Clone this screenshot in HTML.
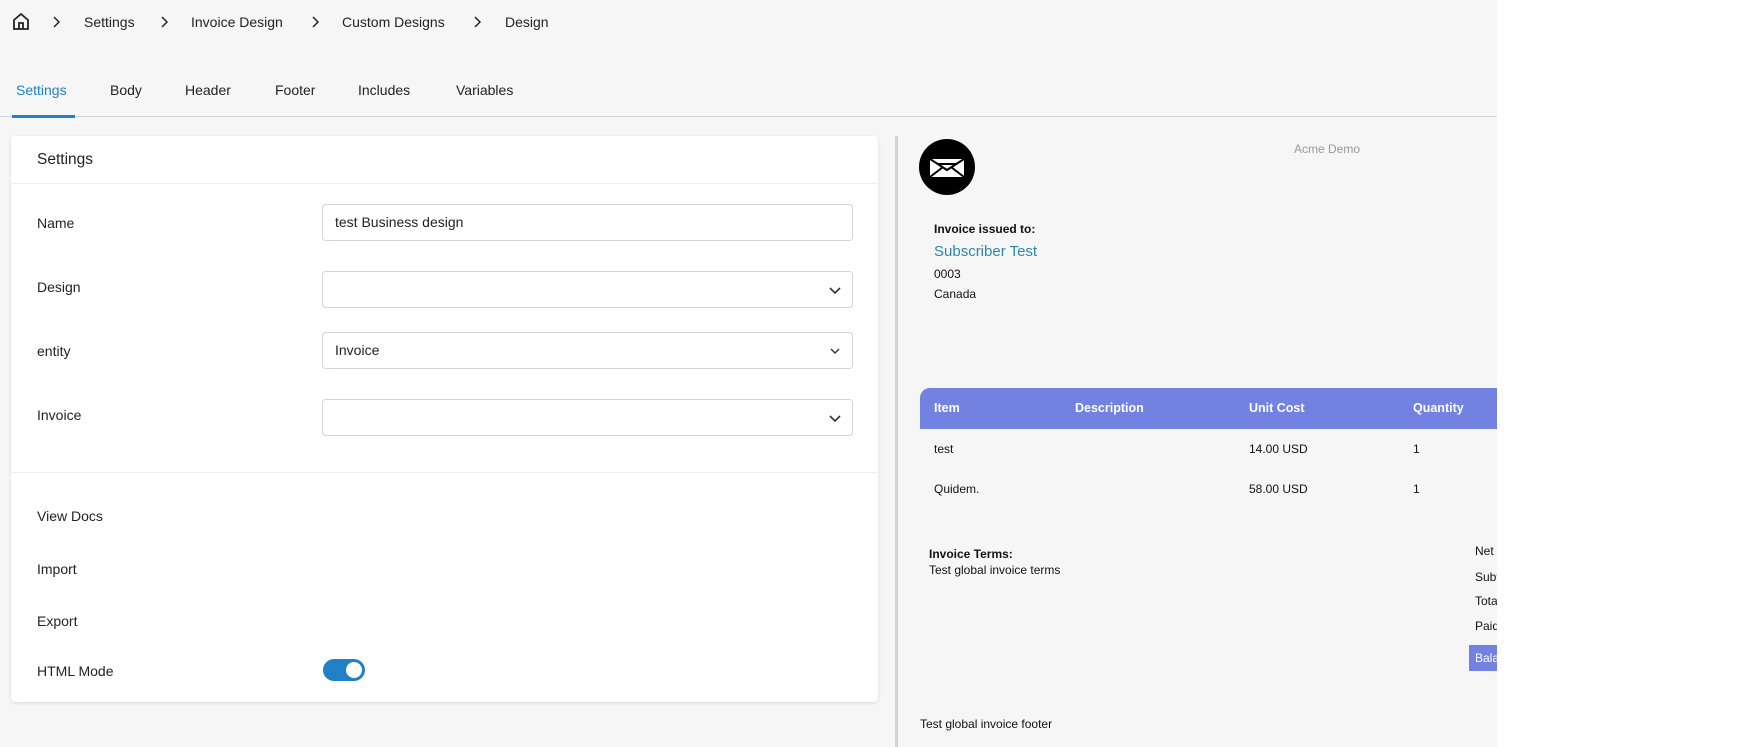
<!DOCTYPE html>
<html><head><meta charset="utf-8"><style>
*{box-sizing:border-box;margin:0;padding:0}
body{width:1740px;height:747px;overflow:hidden;background:#fff;font-family:"Liberation Sans",sans-serif;color:#1f2937;position:relative}
.pg{position:absolute;left:0;top:0;width:1497px;height:747px;background:#f6f6f6;overflow:hidden}
.a{position:absolute;white-space:nowrap}
.bc{font-size:14px;top:14px;color:#222}
.ch{position:absolute;top:16px}
.tab{font-size:14px;top:82px;color:#222}
.card{position:absolute;left:11px;top:136px;width:867px;height:566px;background:#fff;border-radius:4px;box-shadow:0 1px 3px rgba(0,0,0,.12)}
.lbl{font-size:14px;color:#222}
.inp{position:absolute;left:311px;width:531px;height:37px;border:1px solid #d1d5db;border-radius:4px;font-size:14px;padding:0 12px;line-height:35px;color:#222}
.inp svg{position:absolute;right:10px;top:11px}
.pv{font-size:12px;color:#111}
.th{font-size:12.5px;color:#fff;font-weight:bold;top:401px}
</style></head><body>
<div class="pg">
<svg class="a" style="left:12px;top:12px" width="18" height="19" viewBox="0 0 18 19" fill="none" stroke="#222" stroke-width="1.8"><path d="M2 8 L9 2 L16 8 V17 H2 Z M7 17 V11 H11 V17"/></svg>
<svg class="ch" style="left:52px" width="8" height="12" viewBox="0 0 8 12"><path d="M2 1l5 5-5 5" fill="none" stroke="#222" stroke-width="1.5"/></svg>
<span class="a bc" style="left:84px">Settings</span>
<svg class="ch" style="left:160px" width="8" height="12" viewBox="0 0 8 12"><path d="M2 1l5 5-5 5" fill="none" stroke="#222" stroke-width="1.5"/></svg>
<span class="a bc" style="left:191px">Invoice Design</span>
<svg class="ch" style="left:311px" width="8" height="12" viewBox="0 0 8 12"><path d="M2 1l5 5-5 5" fill="none" stroke="#222" stroke-width="1.5"/></svg>
<span class="a bc" style="left:342px">Custom Designs</span>
<svg class="ch" style="left:473px" width="8" height="12" viewBox="0 0 8 12"><path d="M2 1l5 5-5 5" fill="none" stroke="#222" stroke-width="1.5"/></svg>
<span class="a bc" style="left:505px">Design</span>

<span class="a tab" style="left:16px;color:#2280c4">Settings</span>
<span class="a tab" style="left:110px">Body</span>
<span class="a tab" style="left:185px">Header</span>
<span class="a tab" style="left:275px">Footer</span>
<span class="a tab" style="left:358px">Includes</span>
<span class="a tab" style="left:456px">Variables</span>
<div class="a" style="left:0;top:116px;width:1497px;height:1px;background:#d1d5db"></div>
<div class="a" style="left:12px;top:115px;width:63px;height:3px;background:#2280c4"></div>

<div class="card">
<span class="a" style="left:26px;top:15px;font-size:15.5px;color:#222">Settings</span>
<div class="a" style="left:0;top:47px;width:867px;height:1px;background:#eee"></div>
<span class="a lbl" style="left:26px;top:79px">Name</span>
<div class="inp" style="top:68px">test Business design</div>
<span class="a lbl" style="left:26px;top:143px">Design</span>
<div class="inp" style="top:135px"><svg width="14" height="14" viewBox="0 0 14 14"><path d="M2 5l5 5 5-5" fill="none" stroke="#333" stroke-width="1.6"/></svg></div>
<span class="a lbl" style="left:26px;top:207px">entity</span>
<div class="inp" style="top:196px">Invoice<svg width="14" height="14" viewBox="0 0 14 14"><path d="M3 5l4 4 4-4" fill="none" stroke="#333" stroke-width="1.4"/></svg></div>
<span class="a lbl" style="left:26px;top:271px">Invoice</span>
<div class="inp" style="top:263px"><svg width="14" height="14" viewBox="0 0 14 14"><path d="M2 5l5 5 5-5" fill="none" stroke="#333" stroke-width="1.6"/></svg></div>
<div class="a" style="left:0;top:336px;width:867px;height:1px;background:#eee"></div>
<span class="a lbl" style="left:26px;top:372px">View Docs</span>
<span class="a lbl" style="left:26px;top:425px">Import</span>
<span class="a lbl" style="left:26px;top:477px">Export</span>
<span class="a lbl" style="left:26px;top:527px">HTML Mode</span>
<div class="a" style="left:312px;top:523px;width:42px;height:22px;border-radius:11px;background:#2280c4"><div style="position:absolute;right:3px;top:3px;width:16px;height:16px;border-radius:50%;background:#fff"></div></div>
</div>

<div class="a" style="left:895px;top:136px;width:3px;height:611px;background:#d4d4d4"></div>

<div class="a" style="left:919px;top:139px;width:56px;height:56px;border-radius:50%;background:#000"></div>
<svg class="a" style="left:928px;top:157px" width="38" height="22" viewBox="0 0 38 22"><rect x="2" y="2" width="34" height="18" fill="#fff"/><path d="M2 2 L19 13 L36 2 M2 20 L15 10 M36 20 L23 10 M10 7 L28 7" stroke="#000" stroke-width="2" fill="none"/></svg>
<span class="a" style="left:1294px;top:142px;font-size:12px;color:#999">Acme Demo</span>
<span class="a pv" style="left:934px;top:222px;font-weight:bold">Invoice issued to:</span>
<span class="a" style="left:934px;top:243px;font-size:15px;color:#2e86ab">Subscriber Test</span>
<span class="a pv" style="left:934px;top:267px">0003</span>
<span class="a pv" style="left:934px;top:287px">Canada</span>

<div class="a" style="left:920px;top:388px;width:600px;height:41px;background:#7381e0;border-top-left-radius:10px"></div>
<span class="a th" style="left:934px">Item</span>
<span class="a th" style="left:1075px">Description</span>
<span class="a th" style="left:1249px">Unit Cost</span>
<span class="a th" style="left:1413px">Quantity</span>
<span class="a pv" style="left:934px;top:442px">test</span>
<span class="a pv" style="left:1249px;top:442px">14.00 USD</span>
<span class="a pv" style="left:1413px;top:442px">1</span>
<span class="a pv" style="left:934px;top:482px">Quidem.</span>
<span class="a pv" style="left:1249px;top:482px">58.00 USD</span>
<span class="a pv" style="left:1413px;top:482px">1</span>

<span class="a pv" style="left:929px;top:547px;font-weight:bold">Invoice Terms:</span>
<span class="a pv" style="left:929px;top:563px">Test global invoice terms</span>
<span class="a pv" style="left:1475px;top:544px">Net</span>
<span class="a pv" style="left:1475px;top:570px">Subtotal</span>
<span class="a pv" style="left:1475px;top:594px">Total</span>
<span class="a pv" style="left:1475px;top:619px">Paid</span>
<div class="a" style="left:1469px;top:645px;width:40px;height:26px;background:#7381e0"></div>
<span class="a pv" style="left:1475px;top:651px;color:#fff">Balance</span>
<span class="a pv" style="left:920px;top:717px">Test global invoice footer</span>
</div>
</body></html>
